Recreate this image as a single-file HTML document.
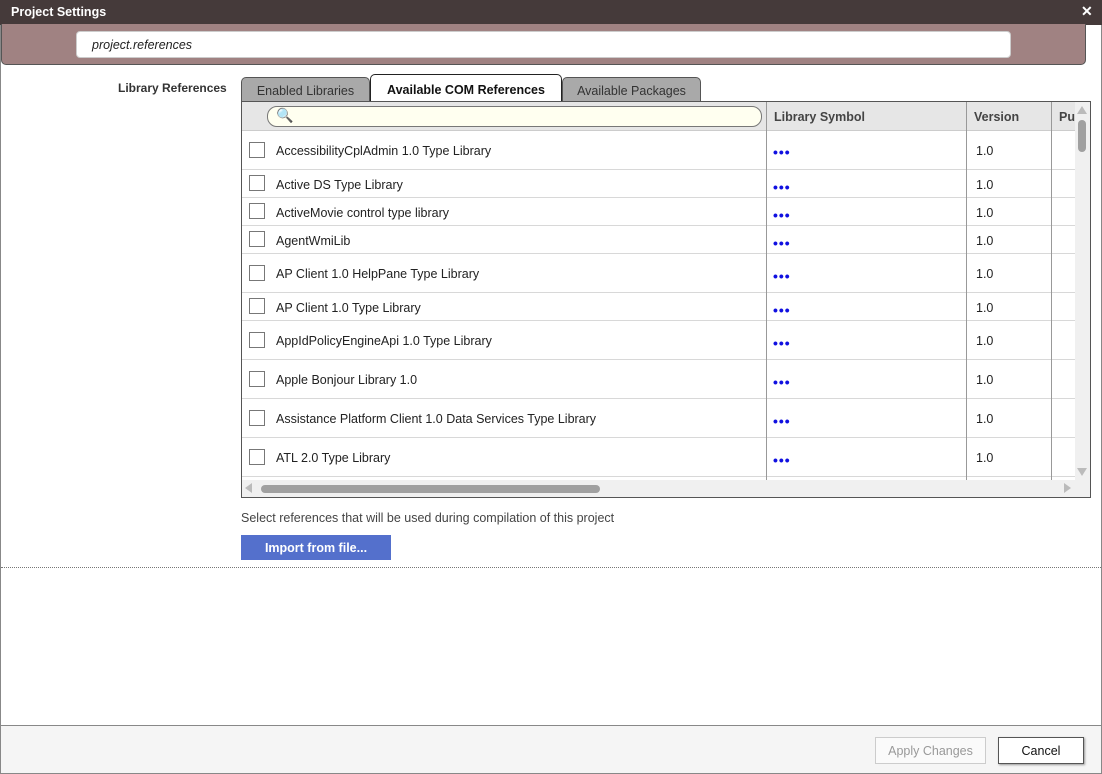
<!DOCTYPE html>
<html><head><meta charset="utf-8"><style>
*{box-sizing:border-box;margin:0;padding:0}
body{width:1102px;height:774px;overflow:hidden;background:#fff;font-family:"Segoe UI","Liberation Sans",sans-serif;font-size:12.5px;color:#222;position:relative}
.a{position:absolute}
.row{position:absolute;left:242px;width:833px;border-bottom:1px solid #d8d8d8}
.cb{position:absolute;left:7px;width:16px;height:16px;border:1px solid #777;background:#fff}
.nm{position:absolute;left:34px;margin-top:2px}
.dots{position:absolute;left:531px;color:#1010e0;font-weight:bold;letter-spacing:1px;font-size:14px;margin-top:3px}
.ver{position:absolute;left:734px;margin-top:2px}
</style></head><body>
<div class="a" style="left:0;top:0;width:1102px;height:774px;border:1px solid #888"></div>
<div class="a" style="left:0;top:0;width:1102px;height:25px;background:#453a3a"></div>
<div class="a" style="left:11px;top:5px;color:#fff;font-weight:bold;font-size:12.5px">Project Settings</div>
<div class="a" style="left:1081px;top:3px;color:#fff;font-size:14px;font-weight:bold">✕</div>
<div class="a" style="left:1px;top:24px;width:1085px;height:41px;background:#a08282;border:1px solid #555;border-top:none;border-radius:0 0 5px 5px"></div>
<div class="a" style="left:76px;top:31px;width:935px;height:27px;background:#fff;border-radius:4px;border:1px solid #ccc"></div>
<div class="a" style="left:92px;top:38px;font-style:italic;font-size:12.5px">project.references</div>
<div class="a" style="left:118px;top:81px;font-weight:bold;color:#333;font-size:12px">Library References</div>
<div class="a" style="left:241px;top:77px;width:129px;height:25px;background:#a9a9a9;border:1px solid #555;border-bottom:none;border-radius:5px 5px 0 0;text-align:center;padding-top:6px;color:#333">Enabled Libraries</div>
<div class="a" style="left:370px;top:74px;width:192px;height:29px;background:#fff;border:1px solid #222;border-bottom:none;border-radius:5px 5px 0 0;text-align:center;padding-top:8px;font-weight:bold;color:#111">Available COM References</div>
<div class="a" style="left:562px;top:77px;width:139px;height:25px;background:#a9a9a9;border:1px solid #555;border-bottom:none;border-radius:5px 5px 0 0;text-align:center;padding-top:6px;color:#333">Available Packages</div>
<div class="a" style="left:241px;top:101px;width:850px;height:397px;border:1px solid #555;background:#fff"></div>
<div class="a" style="left:242px;top:102px;width:833px;height:29px;background:#e6e6e6;border-bottom:1px solid #ccc"></div>
<div class="a" style="left:267px;top:106px;width:495px;height:21px;background:#fffff0;border:1px solid #777;border-radius:10px"></div>
<div class="a" style="left:276px;top:107px;font-size:14px">🔍</div>
<div class="a" style="left:774px;top:110px;font-weight:bold;color:#444">Library Symbol</div>
<div class="a" style="left:974px;top:110px;font-weight:bold;color:#444">Version</div>
<div class="a" style="left:1059px;top:110px;font-weight:bold;color:#444">Pu</div>
<div class="row" style="top:130px;height:40px"><div class="cb" style="top:12px"></div><div class="nm" style="top:12px">AccessibilityCplAdmin 1.0 Type Library</div><div class="dots" style="top:11px">•••</div><div class="ver" style="top:12px">1.0</div></div>
<div class="row" style="top:170px;height:28px"><div class="cb" style="top:5px"></div><div class="nm" style="top:6px">Active DS Type Library</div><div class="dots" style="top:6px">•••</div><div class="ver" style="top:6px">1.0</div></div>
<div class="row" style="top:198px;height:28px"><div class="cb" style="top:5px"></div><div class="nm" style="top:6px">ActiveMovie control type library</div><div class="dots" style="top:6px">•••</div><div class="ver" style="top:6px">1.0</div></div>
<div class="row" style="top:226px;height:28px"><div class="cb" style="top:5px"></div><div class="nm" style="top:6px">AgentWmiLib</div><div class="dots" style="top:6px">•••</div><div class="ver" style="top:6px">1.0</div></div>
<div class="row" style="top:254px;height:39px"><div class="cb" style="top:11px"></div><div class="nm" style="top:11px">AP Client 1.0 HelpPane Type Library</div><div class="dots" style="top:11px">•••</div><div class="ver" style="top:11px">1.0</div></div>
<div class="row" style="top:293px;height:28px"><div class="cb" style="top:5px"></div><div class="nm" style="top:6px">AP Client 1.0 Type Library</div><div class="dots" style="top:6px">•••</div><div class="ver" style="top:6px">1.0</div></div>
<div class="row" style="top:321px;height:39px"><div class="cb" style="top:11px"></div><div class="nm" style="top:11px">AppIdPolicyEngineApi 1.0 Type Library</div><div class="dots" style="top:11px">•••</div><div class="ver" style="top:11px">1.0</div></div>
<div class="row" style="top:360px;height:39px"><div class="cb" style="top:11px"></div><div class="nm" style="top:11px">Apple Bonjour Library 1.0</div><div class="dots" style="top:11px">•••</div><div class="ver" style="top:11px">1.0</div></div>
<div class="row" style="top:399px;height:39px"><div class="cb" style="top:11px"></div><div class="nm" style="top:11px">Assistance Platform Client 1.0 Data Services Type Library</div><div class="dots" style="top:11px">•••</div><div class="ver" style="top:11px">1.0</div></div>
<div class="row" style="top:438px;height:39px"><div class="cb" style="top:11px"></div><div class="nm" style="top:11px">ATL 2.0 Type Library</div><div class="dots" style="top:11px">•••</div><div class="ver" style="top:11px">1.0</div></div>
<div class="a" style="left:766px;top:102px;width:1px;height:378px;background:#999"></div>
<div class="a" style="left:966px;top:102px;width:1px;height:378px;background:#999"></div>
<div class="a" style="left:1051px;top:102px;width:1px;height:378px;background:#999"></div>
<div class="a" style="left:1075px;top:102px;width:15px;height:378px;background:#f0f0f0"></div>
<div class="a" style="left:1078px;top:120px;width:8px;height:32px;background:#a0a0a0;border-radius:4px"></div>
<div class="a" style="left:1077px;top:106px;width:0;height:0;border-left:5px solid transparent;border-right:5px solid transparent;border-bottom:8px solid #bbb"></div>
<div class="a" style="left:1077px;top:468px;width:0;height:0;border-left:5px solid transparent;border-right:5px solid transparent;border-top:8px solid #bbb"></div>
<div class="a" style="left:242px;top:480px;width:848px;height:17px;background:#f0f0f0"></div>
<div class="a" style="left:261px;top:485px;width:339px;height:8px;background:#a0a0a0;border-radius:4px"></div>
<div class="a" style="left:245px;top:483px;width:0;height:0;border-top:5px solid transparent;border-bottom:5px solid transparent;border-right:7px solid #bbb"></div>
<div class="a" style="left:1064px;top:483px;width:0;height:0;border-top:5px solid transparent;border-bottom:5px solid transparent;border-left:7px solid #bbb"></div>
<div class="a" style="left:241px;top:511px;color:#444">Select references that will be used during compilation of this project</div>
<div class="a" style="left:241px;top:535px;width:150px;height:25px;background:#5470cc;color:#fff;font-weight:bold;text-align:center;padding-top:6px">Import from file...</div>
<div class="a" style="left:1px;top:567px;width:1100px;border-top:1px dotted #777"></div>
<div class="a" style="left:1px;top:725px;width:1100px;height:48px;background:#f5f5f5;border-top:1px solid #888"></div>
<div class="a" style="left:875px;top:737px;width:111px;height:27px;border:1px solid #ccc;background:#fafafa;color:#999;text-align:center;padding-top:6px">Apply Changes</div>
<div class="a" style="left:998px;top:737px;width:86px;height:27px;border:1px solid #555;background:#fff;color:#111;text-align:center;padding-top:6px;box-shadow:1px 1px 2px #999">Cancel</div>
</body></html>
